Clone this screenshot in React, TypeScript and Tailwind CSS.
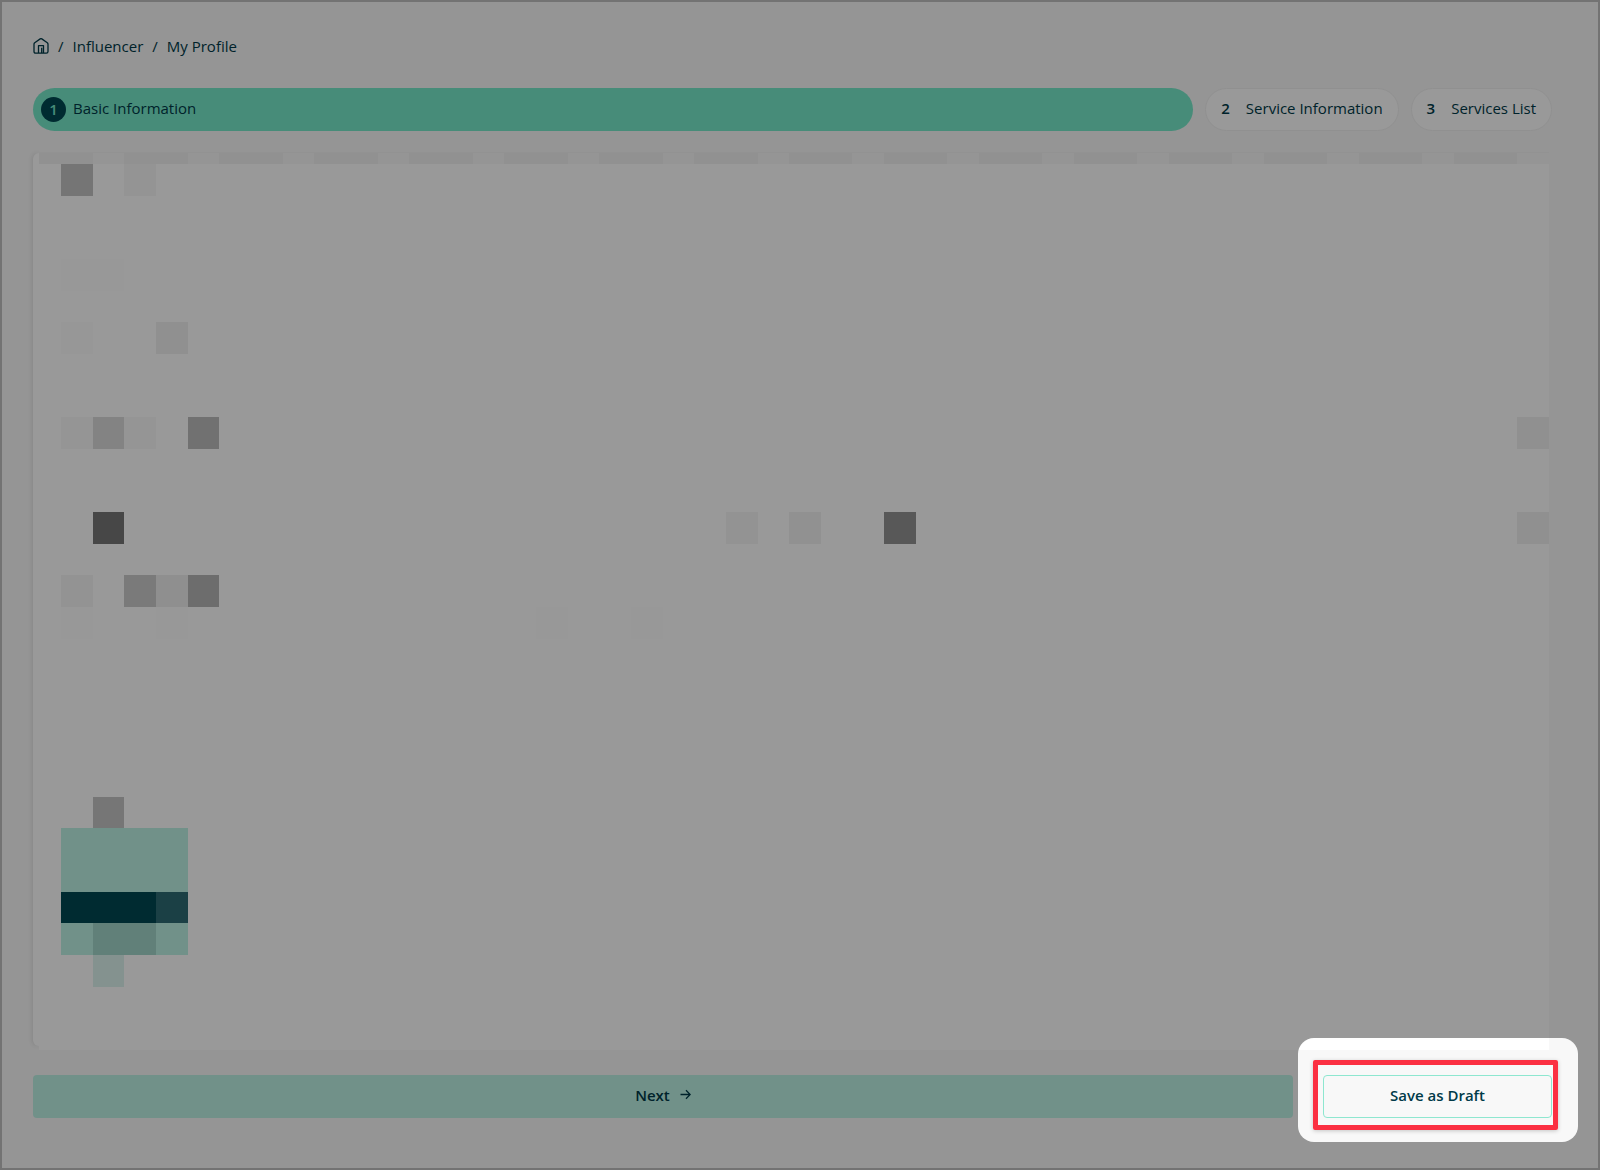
import { Fragment } from 'react';

const COLUMNS = 47;
const ROWS = 28;

interface Block {
  col: number;
  row: number;
  width?: number;
  height?: number;
  color: string;
}

// Redacted profile form, positions counted in mosaic cells
const BLOCKS: Block[] = [
  { col: 1, row: 1, color: '#c3c3c3' },
  { col: 3, row: 1, color: '#f7f7f7' },
  { col: 1, row: 4, width: 2, color: '#fdfdfd' },
  { col: 1, row: 6, color: '#fcfcfc' },
  { col: 4, row: 6, color: '#f0f0f0' },
  { col: 1, row: 9, color: '#f8f8f8' },
  { col: 2, row: 9, color: '#dbdbdb' },
  { col: 3, row: 9, color: '#f9f9f9' },
  { col: 5, row: 9, color: '#bdbdbd' },
  { col: 47, row: 9, color: '#f1f1f1' },
  { col: 2, row: 12, color: '#777777' },
  { col: 22, row: 12, color: '#f6f6f6' },
  { col: 24, row: 12, color: '#f2f2f2' },
  { col: 27, row: 12, color: '#939393' },
  { col: 47, row: 12, color: '#f1f1f1' },
  { col: 1, row: 14, color: '#f6f6f6' },
  { col: 3, row: 14, color: '#cbcbcb' },
  { col: 4, row: 14, color: '#eeeeee' },
  { col: 5, row: 14, color: '#b6b6b6' },
  { col: 1, row: 15, color: '#fdfdfd' },
  { col: 4, row: 15, color: '#fefefe' },
  { col: 16, row: 15, color: '#fdfdfd' },
  { col: 19, row: 15, color: '#fefefe' },
  { col: 2, row: 21, color: '#c5c5c5' },
  { col: 1, row: 22, width: 4, height: 2, color: '#bcf2e5' },
  { col: 1, row: 24, width: 3, color: '#004853' },
  { col: 4, row: 24, color: '#2e6b73' },
  { col: 1, row: 25, color: '#bcf2e5' },
  { col: 2, row: 25, width: 2, color: '#a2d6ca' },
  { col: 4, row: 25, color: '#bcf2e5' },
  { col: 2, row: 26, color: '#dcf4ee' },
];

const CRUMBS = ['Influencer', 'My Profile'];

const STEPS = [
  { number: 2, label: 'Service Information' },
  { number: 3, label: 'Services List' },
];

function HomeIcon() {
  return (
    <svg className="w-4 h-4" viewBox="0 0 16 16" fill="none" stroke="currentColor" strokeWidth="1.3" strokeLinejoin="round">
      <path d="M1 6.200Q1 5.400 1.700 4.800L7.200.9Q8 .4 8.800.9l5.500 3.900q.7.6.7 1.400v7.300q0 1.700-1.700 1.700H2.700Q1 15.200 1 13.500z" />
      <path d="M5.500 15V7.600h5V15M8.700 15V9.800" />
    </svg>
  );
}

function ArrowIcon() {
  return (
    <svg className="w-[11px] h-[11px]" viewBox="0 0 11 11" fill="none" stroke="currentColor" strokeWidth="1.3">
      <path d="M.5 5.500h9.500M6 1.300l4.200 4.200L6 9.700" />
    </svg>
  );
}

function Breadcrumb() {
  return (
    <nav aria-label="Breadcrumb" className="flex items-center gap-[9px] h-6">
      <a href="#home" aria-label="Home">
        <HomeIcon />
      </a>
      {CRUMBS.map((crumb) => (
        <Fragment key={crumb}>
          <span>/</span>
          <a href="#profile">{crumb}</a>
        </Fragment>
      ))}
    </nav>
  );
}

function Stepper() {
  return (
    <div className="flex gap-3 mt-[30px]">
      <button type="button" className="flex flex-1 items-center gap-[7px] h-[43px] pl-2 rounded-full bg-[#77e9ca]">
        <span className="flex items-center justify-center w-[25px] h-[25px] pb-[2px] rounded-full bg-[#004853] text-[#77e9ca] font-semibold">
          1
        </span>
        <span className="pb-1">Basic Information</span>
      </button>
      {STEPS.map((step) => (
        <button
          key={step.number}
          type="button"
          className="flex items-center gap-4 h-[43px] px-[15px] pb-1 rounded-full border border-[#f1f1f1] bg-white"
        >
          <span className="font-semibold">{step.number}</span>
          {step.label}
        </button>
      ))}
    </div>
  );
}

function ProfilePanel() {
  return (
    <section aria-label="Basic Information" className="flex flex-1 mt-[22px] mr-[3px]">
      <div className="w-[6px] mb-1 rounded-l-[6px] bg-white shadow-[-1px_0_4px_rgba(0,0,0,0.1)]" />
      <div className="flex flex-1 flex-col bg-white shadow-[0_-1px_0_#f3f3f3]">
        <div className="flex h-[11px]">
          <span className="w-[22px] bg-[#f2f2f2]" />
          <div className="grid flex-1" style={{ gridTemplateColumns: `repeat(${COLUMNS}, minmax(0, 1fr))` }}>
            {Array.from({ length: COLUMNS }, (_, i) => (
              <span key={i} className={i % 3 === 1 ? 'bg-[#f8f8f8]' : 'bg-[#f2f2f2]'} />
            ))}
          </div>
        </div>
        <div
          className="grid flex-1 ml-[22px]"
          style={{
            gridTemplateColumns: `repeat(${COLUMNS}, minmax(0, 1fr))`,
            gridTemplateRows: `repeat(${ROWS}, minmax(0, 1fr))`,
          }}
        >
          {BLOCKS.map((block) => (
            <span
              key={`${block.col}-${block.row}`}
              style={{
                gridColumn: `${block.col} / span ${block.width ?? 1}`,
                gridRow: `${block.row} / span ${block.height ?? 1}`,
                background: block.color,
              }}
            />
          ))}
        </div>
      </div>
    </section>
  );
}

function Actions() {
  return (
    <div className="flex gap-[30px] mt-[25px] font-semibold">
      <button type="button" className="flex flex-1 items-center justify-center gap-[10px] h-[43px] pb-1 rounded-sm bg-[#bcf2e5]">
        Next
        <ArrowIcon />
      </button>
      <div className="relative w-[229px]">
        <button type="button" className="w-full h-[43px] pb-1 rounded-sm border border-[#8ee7d0]">
          Save as Draft
        </button>
        {/* The spotlight's spread shadow dims everything around the button */}
        <div className="absolute -left-[25px] -right-[26px] -top-[37px] -bottom-[24px] rounded-2xl shadow-[0_0_0_2000px_rgba(0,0,0,0.4)] pointer-events-none" />
        <div className="absolute -left-[10px] -right-[6px] -top-[15px] -bottom-[12px] rounded-xs border-[5px] border-[#fb3042] shadow-[0_1px_4px_rgba(0,0,0,0.2)] pointer-events-none" />
      </div>
    </div>
  );
}

export default function App() {
  return (
    <div className="relative flex flex-col min-h-screen pl-[33px] pr-12 pt-[34px] pb-[52px] overflow-hidden bg-[#f8f8f8] text-[#003a48] text-[15px] leading-6 font-['Open_Sans',sans-serif]">
      <Breadcrumb />
      <Stepper />
      <ProfilePanel />
      <Actions />
      <div className="absolute inset-0 border-2 border-[#737373] pointer-events-none" />
    </div>
  );
}
